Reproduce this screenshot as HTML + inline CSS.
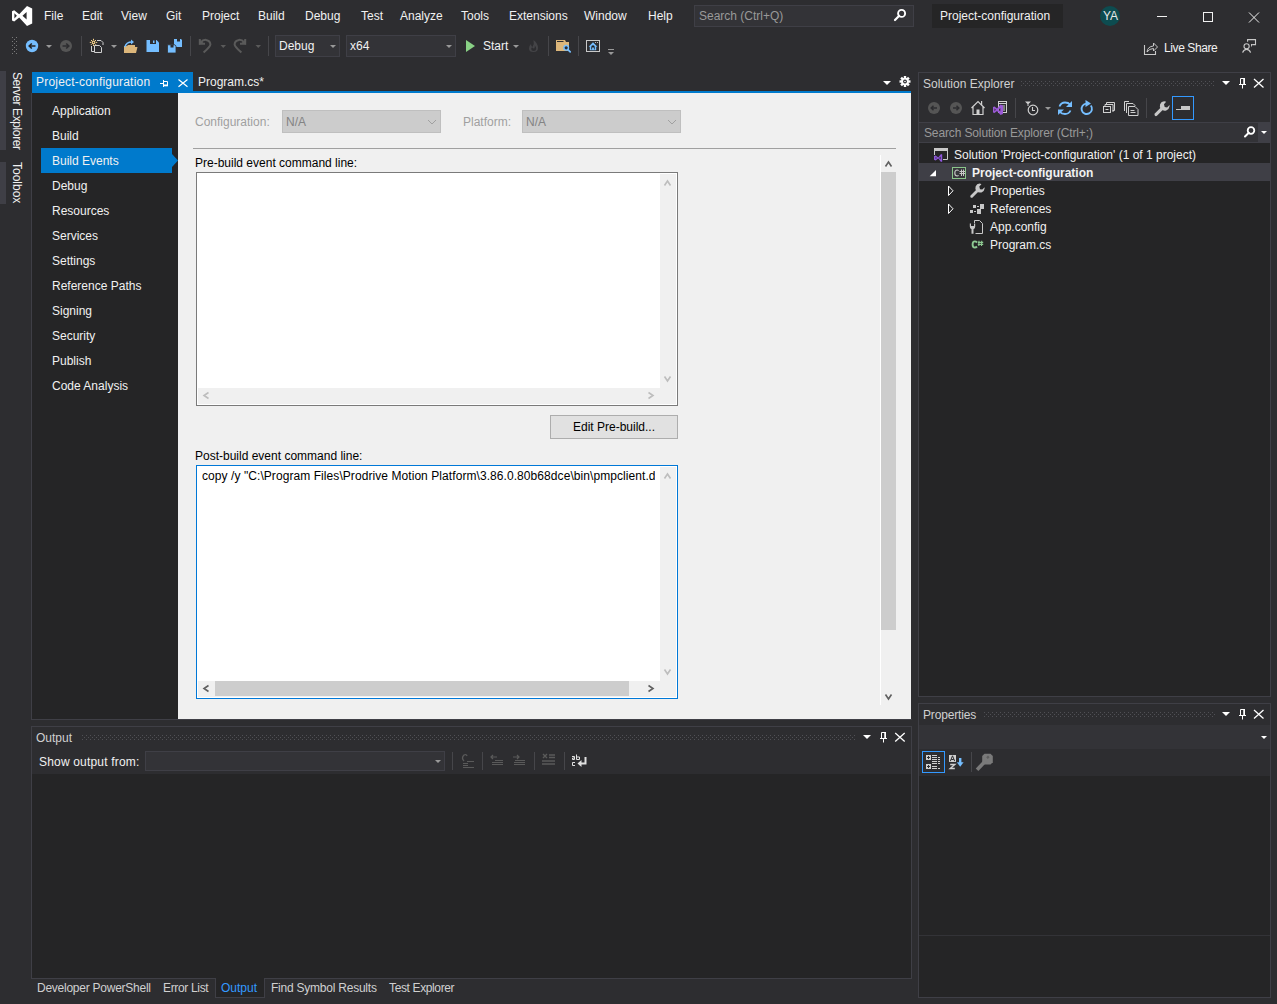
<!DOCTYPE html>
<html><head><meta charset="utf-8">
<style>
*{margin:0;padding:0;box-sizing:border-box}
html,body{width:1277px;height:1004px;overflow:hidden;background:#2d2d30;font-family:"Liberation Sans",sans-serif;font-size:12px;color:#f1f1f1}
.a{position:absolute}
.t{position:absolute;white-space:nowrap;line-height:14px}
svg.ov{position:absolute;left:0;top:0;overflow:visible}
.nav{position:absolute;left:52px;white-space:nowrap;line-height:14px;color:#f1f1f1}
.blk{color:#000}
</style></head><body>

<!-- ===== TITLE / MENU BAR ===== -->
<div class="t" style="left:44px;top:9px">File</div>
<div class="t" style="left:82px;top:9px">Edit</div>
<div class="t" style="left:121px;top:9px">View</div>
<div class="t" style="left:166px;top:9px">Git</div>
<div class="t" style="left:202px;top:9px">Project</div>
<div class="t" style="left:258px;top:9px">Build</div>
<div class="t" style="left:305px;top:9px">Debug</div>
<div class="t" style="left:361px;top:9px">Test</div>
<div class="t" style="left:400px;top:9px">Analyze</div>
<div class="t" style="left:461px;top:9px">Tools</div>
<div class="t" style="left:509px;top:9px">Extensions</div>
<div class="t" style="left:584px;top:9px">Window</div>
<div class="t" style="left:648px;top:9px">Help</div>
<div class="a" style="left:694px;top:5px;width:220px;height:22px;background:#333337;border:1px solid #3f3f46"></div>
<div class="t" style="left:699px;top:9px;color:#999">Search (Ctrl+Q)</div>
<div class="a" style="left:932px;top:4px;width:131px;height:24px;background:#252526"></div>
<div class="t" style="left:940px;top:9px">Project-configuration</div>
<div class="a" style="left:1100px;top:6px;width:20px;height:20px;border-radius:50%;background:#0d4c50"></div>
<div class="t" style="left:1103px;top:9px;color:#e8e8e8">YA</div>

<!-- ===== TOOLBAR ===== -->
<div class="a" style="left:275px;top:35px;width:65px;height:22px;background:#333337;border:1px solid #3f3f46"></div>
<div class="t" style="left:279px;top:39px">Debug</div>
<div class="a" style="left:346px;top:35px;width:110px;height:22px;background:#333337;border:1px solid #3f3f46"></div>
<div class="t" style="left:350px;top:39px">x64</div>
<div class="t" style="left:483px;top:39px">Start</div>
<div class="t" style="left:1164px;top:41px;letter-spacing:-0.4px">Live Share</div>

<!-- ===== LEFT STRIP ===== -->
<div class="a" style="left:0;top:71px;width:6px;height:79px;background:#3f3f46"></div>
<div class="a" style="left:0;top:162px;width:6px;height:42px;background:#3f3f46"></div>
<div class="t" style="left:10px;top:72px;transform-origin:0 0;transform:translate(14px,0) rotate(90deg);letter-spacing:-0.38px">Server Explorer</div>
<div class="t" style="left:10px;top:162px;transform-origin:0 0;transform:translate(14px,0) rotate(90deg)">Toolbox</div>

<!-- ===== DOCUMENT WELL ===== -->
<div class="a" style="left:31px;top:93px;width:1px;height:627px;background:#3f3f46"></div>
<div class="a" style="left:31px;top:719px;width:881px;height:1px;background:#3f3f46"></div>
<div class="a" style="left:32px;top:72px;width:161px;height:21px;background:#007acc"></div>
<div class="t" style="left:36px;top:75px;letter-spacing:0.2px">Project-configuration</div>
<div class="t" style="left:198px;top:75px">Program.cs*</div>
<div class="a" style="left:32px;top:91px;width:879px;height:2px;background:#007acc"></div>

<!-- ===== PROPERTY PAGE ===== -->
<div class="a" style="left:32px;top:93px;width:146px;height:626px;background:#252526"></div>
<div class="a" style="left:178px;top:93px;width:733px;height:626px;background:#f0f0f0"></div>
<div class="a" style="left:41px;top:148px;width:131px;height:25px;background:#007acc"></div>
<div class="nav" style="top:104px">Application</div>
<div class="nav" style="top:129px">Build</div>
<div class="nav" style="top:154px">Build Events</div>
<div class="nav" style="top:179px">Debug</div>
<div class="nav" style="top:204px">Resources</div>
<div class="nav" style="top:229px">Services</div>
<div class="nav" style="top:254px">Settings</div>
<div class="nav" style="top:279px">Reference Paths</div>
<div class="nav" style="top:304px">Signing</div>
<div class="nav" style="top:329px">Security</div>
<div class="nav" style="top:354px">Publish</div>
<div class="nav" style="top:379px">Code Analysis</div>

<div class="t" style="left:195px;top:115px;color:#a0a0a0">Configuration:</div>
<div class="a" style="left:282px;top:110px;width:159px;height:23px;background:#cccccc;border:1px solid #bfbfbf"></div>
<div class="t" style="left:286px;top:115px;color:#838383">N/A</div>
<div class="t" style="left:463px;top:115px;color:#a0a0a0">Platform:</div>
<div class="a" style="left:522px;top:110px;width:159px;height:23px;background:#cccccc;border:1px solid #bfbfbf"></div>
<div class="t" style="left:526px;top:115px;color:#838383">N/A</div>
<div class="a" style="left:193px;top:148px;width:703px;height:1px;background:#a0a0a0"></div>

<div class="t blk" style="left:195px;top:156px">Pre-build event command line:</div>
<div class="a" style="left:196px;top:172px;width:482px;height:234px;background:#fff;border:1px solid #7a7a7a"></div>
<div class="a" style="left:660px;top:174px;width:16px;height:214px;background:#f0f0f0"></div>
<div class="a" style="left:198px;top:388px;width:478px;height:16px;background:#f0f0f0"></div>

<div class="a" style="left:550px;top:415px;width:128px;height:24px;background:#e1e1e1;border:1px solid #adadad"></div>
<div class="t blk" style="left:573px;top:420px">Edit Pre-build...</div>

<div class="t blk" style="left:195px;top:449px">Post-build event command line:</div>
<div class="a" style="left:196px;top:465px;width:482px;height:234px;background:#fff;border:1px solid #0078d7"></div>
<div class="a" style="left:660px;top:467px;width:16px;height:214px;background:#f0f0f0"></div>
<div class="a" style="left:198px;top:681px;width:478px;height:16px;background:#f0f0f0"></div>
<div class="a" style="left:215px;top:681px;width:414px;height:15px;background:#cdcdcd"></div>
<div class="a" style="left:202px;top:468px;width:453px;height:16px;overflow:hidden"><div class="t blk" style="left:0;top:1px;letter-spacing:0.07px">copy /y "C:\Program Files\Prodrive Motion Platform\3.86.0.80b68dce\bin\pmpclient.dll" "$(TargetDir)"</div></div>

<!-- page scrollbar -->
<div class="a" style="left:880px;top:155px;width:1px;height:550px;background:#fff"></div>
<div class="a" style="left:881px;top:172px;width:15px;height:458px;background:#cdcdcd"></div>

<!-- ===== OUTPUT ===== -->
<div class="a" style="left:31px;top:726px;width:881px;height:253px;background:#2d2d30;border:1px solid #3f3f46"></div>
<div class="a" style="left:32px;top:774px;width:879px;height:204px;background:#252526"></div>
<div class="t" style="left:36px;top:731px;color:#d0d0d0">Output</div>
<div class="t" style="left:39px;top:755px;letter-spacing:0.18px">Show output from:</div>
<div class="a" style="left:145px;top:751px;width:300px;height:20px;background:#333337;border:1px solid #3f3f46"></div>
<div class="a" style="left:215px;top:978px;width:50px;height:20px;background:#252526;border:1px solid #3f3f46;border-top:none"></div>
<div class="t" style="left:37px;top:981px;color:#d0d0d0;letter-spacing:-0.25px">Developer PowerShell</div>
<div class="t" style="left:163px;top:981px;color:#d0d0d0;letter-spacing:-0.33px">Error List</div>
<div class="t" style="left:221px;top:981px;color:#3399ff">Output</div>
<div class="t" style="left:271px;top:981px;color:#d0d0d0;letter-spacing:-0.23px">Find Symbol Results</div>
<div class="t" style="left:389px;top:981px;color:#d0d0d0;letter-spacing:-0.37px">Test Explorer</div>

<!-- ===== SOLUTION EXPLORER ===== -->
<div class="a" style="left:918px;top:72px;width:353px;height:625px;background:#2d2d30;border:1px solid #3f3f46"></div>
<div class="a" style="left:919px;top:143px;width:351px;height:553px;background:#252526"></div>
<div class="t" style="left:923px;top:77px;color:#d0d0d0">Solution Explorer</div>
<div class="a" style="left:919px;top:122px;width:351px;height:21px;background:#333337;border-top:1px solid #3f3f46;border-bottom:1px solid #3f3f46"></div>
<div class="a" style="left:1258px;top:123px;width:12px;height:19px;background:#3f3f46"></div>
<div class="t" style="left:924px;top:126px;color:#999;letter-spacing:-0.13px">Search Solution Explorer (Ctrl+;)</div>
<div class="a" style="left:919px;top:163px;width:351px;height:18px;background:#3f3f46"></div>
<div class="t" style="left:954px;top:148px">Solution 'Project-configuration' (1 of 1 project)</div>
<div class="t" style="left:972px;top:166px;font-weight:bold">Project-configuration</div>
<div class="t" style="left:990px;top:184px">Properties</div>
<div class="t" style="left:990px;top:202px">References</div>
<div class="t" style="left:990px;top:220px">App.config</div>
<div class="t" style="left:990px;top:238px">Program.cs</div>

<!-- ===== PROPERTIES ===== -->
<div class="a" style="left:918px;top:703px;width:353px;height:295px;background:#2d2d30;border:1px solid #3f3f46"></div>
<div class="a" style="left:919px;top:725px;width:351px;height:24px;background:#333337"></div>
<div class="a" style="left:919px;top:776px;width:351px;height:221px;background:#252526"></div>
<div class="a" style="left:919px;top:935px;width:351px;height:1px;background:#333337"></div>
<div class="t" style="left:923px;top:708px;color:#d0d0d0;letter-spacing:-0.15px">Properties</div>


<svg class="ov" width="1277" height="1004" viewBox="0 0 1277 1004" shape-rendering="geometricPrecision">
<defs>
<pattern id="gO" x="82" y="735" width="4" height="6" patternUnits="userSpaceOnUse"><rect x="0" y="0" width="1" height="1" fill="#505055"/><rect x="2" y="2" width="1" height="1" fill="#505055"/><rect x="0" y="4" width="1" height="1" fill="#505055"/></pattern>
<pattern id="gS" x="1021" y="81" width="4" height="6" patternUnits="userSpaceOnUse"><rect x="0" y="0" width="1" height="1" fill="#505055"/><rect x="2" y="2" width="1" height="1" fill="#505055"/><rect x="0" y="4" width="1" height="1" fill="#505055"/></pattern>
<pattern id="gP" x="984" y="712" width="4" height="6" patternUnits="userSpaceOnUse"><rect x="0" y="0" width="1" height="1" fill="#505055"/><rect x="2" y="2" width="1" height="1" fill="#505055"/><rect x="0" y="4" width="1" height="1" fill="#505055"/></pattern>

</defs>
<!-- VS logo -->
<path fill="#fff" fill-rule="evenodd" d="M12 11.2 L14.2 10.2 L19.2 14.2 L27 6 L32.2 8.4 L32.2 23.6 L27 26 L19.2 17.4 L14.2 21.4 L12 20.4 Z M14.4 13.2 L16.9 15.7 L14.4 18.4 Z M26.6 12 L22.5 15.7 L26.6 19.6 Z"/>
<!-- title search icon -->
<circle cx="901.6" cy="13.4" r="3.5" fill="none" stroke="#fff" stroke-width="1.9"/>
<path d="M899.2 15.8 L895 20" stroke="#fff" stroke-width="2.2" stroke-linecap="round"/>
<!-- window controls -->
<path d="M1157 16.5h10" stroke="#f1f1f1" stroke-width="1"/>
<rect x="1203.5" y="12.5" width="9" height="9" fill="none" stroke="#f1f1f1" stroke-width="1"/>
<path d="M1249 12.5 L1259 22.5 M1259 12.5 L1249 22.5" stroke="#f1f1f1" stroke-width="1"/>

<!-- toolbar grip -->
<g fill="#7a7a7a">
<rect x="12" y="37" width="1" height="1"/><rect x="16" y="37" width="1" height="1"/><rect x="14" y="39" width="1" height="1"/>
<rect x="12" y="41" width="1" height="1"/><rect x="16" y="41" width="1" height="1"/><rect x="14" y="43" width="1" height="1"/>
<rect x="12" y="45" width="1" height="1"/><rect x="16" y="45" width="1" height="1"/><rect x="14" y="47" width="1" height="1"/>
<rect x="12" y="49" width="1" height="1"/><rect x="16" y="49" width="1" height="1"/><rect x="14" y="51" width="1" height="1"/>
<rect x="12" y="53" width="1" height="1"/><rect x="16" y="53" width="1" height="1"/>
</g>
<!-- back / fwd -->
<circle cx="32" cy="46" r="6.2" fill="#75beff"/>
<path d="M35.5 46 H29.5 M31.8 43.5 L29.2 46 L31.8 48.5" stroke="#252526" stroke-width="1.6" fill="none"/>
<path d="M46 45h6l-3 3z" fill="#999"/>
<circle cx="66" cy="46" r="6" fill="#555"/>
<path d="M62.5 46 H68.5 M66.2 43.5 L68.8 46 L66.2 48.5" stroke="#2d2d30" stroke-width="1.6" fill="none"/>
<rect x="81" y="36" width="1" height="20" fill="#46464a"/>
<!-- new project -->
<path d="M91.5 46 V51.5 H94 M97 40.5 H101 L103 42.5 V45" stroke="#d0d0d0" stroke-width="1" fill="none"/>
<path d="M94.5 52.5 V45.5 H99.5 L101.5 47.5 V52.5 Z" stroke="#d0d0d0" stroke-width="1" fill="#2d2d30"/>
<g stroke="#f9d48b" stroke-width="1"><path d="M93.5 38.8v1.6 M93.5 44.4v1.6 M89.8 42.4h1.6 M95.6 42.4h1.6 M91 40l1 1 M96 40l-1 1 M91 44.8l1 -1 M96 44.8l-1 -1"/></g>
<rect x="92.4" y="41.3" width="2.2" height="2.2" fill="none" stroke="#f9d48b" stroke-width="0.9"/>
<path d="M111 45h6l-3 3z" fill="#999"/>
<!-- open folder -->
<path d="M124 53 V46 H127 L128 45 H135 V47 H137.5 L136 53 Z" fill="#dcb67a"/>
<path d="M125 47 Q126 42 132 42" stroke="#75beff" stroke-width="1.6" fill="none"/>
<path d="M131 39.5 L134 42 L131 44.5 Z" fill="#75beff"/>
<!-- save -->
<path d="M146.5 40 H156.5 L159 42.5 V52 H146.5 Z" fill="#75beff"/>
<rect x="150" y="40" width="6" height="4" fill="#2d2d30"/><rect x="153" y="40.5" width="1.5" height="2.5" fill="#75beff"/>
<!-- save all -->
<path d="M174 39 H181 L182 40 V47 H174 Z" fill="#75beff"/>
<rect x="177" y="39" width="3" height="2.5" fill="#2d2d30"/>
<path d="M167.5 44.8 H175 L176 46 V53 H167.5 Z" fill="#75beff" stroke="#2d2d30" stroke-width="0.8"/>
<rect x="170.5" y="45" width="3" height="2.5" fill="#2d2d30"/>
<rect x="190" y="36" width="1" height="20" fill="#46464a"/>
<!-- undo redo -->
<g stroke="#5a5a5a" stroke-width="2" fill="none">
<path d="M200.6 42.6 Q203 39.6 206 39.9 Q210.4 40.6 210.4 44.5 Q210.4 46.5 203.6 52.6"/>
<path d="M199.8 39 V43.8 H205"/>
<path d="M244.4 42.6 Q242 39.6 239 39.9 Q234.6 40.6 234.6 44.5 Q234.6 46.5 241.4 52.6"/>
<path d="M245.2 39 V43.8 H240"/>
</g>
<path d="M199 39 L203.5 43 L199 44.8 Z" fill="#5a5a5a"/>
<path d="M246 39 L241.5 43 L246 44.8 Z" fill="#5a5a5a"/>
<path d="M220.5 45h5.5l-2.75 3z" fill="#5a5a5a"/>
<path d="M255.5 45h5.5l-2.75 3z" fill="#5a5a5a"/>
<rect x="268" y="36" width="1" height="20" fill="#46464a"/>
<!-- combos arrows -->
<path d="M330 45h6l-3 3z" fill="#999"/>
<path d="M446 45h6l-3 3z" fill="#999"/>
<!-- start -->
<path d="M466 40 L475 46 L466 52 Z" fill="#89d185"/>
<path d="M513 45h6l-3 3z" fill="#999"/>
<path d="M533.5 40 Q538 43.5 538 48 Q538 52 533.5 52 Q529 52 529 48.5 Q529 45.5 531 44 Q531 46.5 532.5 47 Q534.5 44 533.5 40 Z" fill="#444447"/>
<path d="M533.6 51 Q531.2 51 531.2 49 Q531.2 47.8 532.2 47.2 Q533 48.6 534.2 48.4 Q535.2 47 534.8 45.5 Q536.2 47 536.2 48.8 Q536.2 51 533.6 51 Z" fill="#2d2d30"/>
<rect x="548" y="36" width="1" height="20" fill="#46464a"/>
<!-- folder search -->
<path d="M556 51 V40 H565 L566 42 H569 V51 Z" fill="#dcb67a"/>
<rect x="557" y="41" width="6.5" height="1" fill="#2d2d30"/>
<circle cx="566.2" cy="47.8" r="2.3" fill="#2d2d30" stroke="#75beff" stroke-width="1.4"/>
<path d="M567.9 49.6 L570.2 51.9" stroke="#75beff" stroke-width="1.7" stroke-linecap="round"/>
<rect x="578" y="36" width="1" height="20" fill="#46464a"/>
<!-- home window -->
<rect x="586.5" y="40.5" width="13" height="11" fill="none" stroke="#c8c8c8" stroke-width="1"/>
<path d="M588.6 46.8 L593 42.3 L597.4 46.8 L596.2 46.8 V50.2 H589.8 V46.8 Z" fill="#75beff"/>
<path d="M591.3 49.5 V47 Q591.3 45.2 593 45.2 Q594.7 45.2 594.7 47 V49.5 H593.9 V47.5 H592.1 V49.5 Z" fill="#1e1e1e"/>
<circle cx="595.5" cy="42.5" r="0.6" fill="#d0d0d0"/><circle cx="597.5" cy="42.5" r="0.6" fill="#d0d0d0"/>
<path d="M608 49.5h6" stroke="#999" stroke-width="1"/><path d="M608 52h6l-3 3z" fill="#999"/>
<!-- live share -->
<path d="M1144.5 45 V54.5 H1155.5 V51" stroke="#c8c8c8" stroke-width="1.1" fill="none"/>
<path d="M1147 52 Q1147.5 46.5 1153.5 46 V43 L1157.5 47 L1153.5 51 V48.5 Q1149.5 48.5 1147 52 Z" stroke="#c8c8c8" stroke-width="1" fill="none"/>
<!-- feedback -->
<path d="M1247.6 41.8 V39.6 H1255.5 V44.6 H1252.5" stroke="#c8c8c8" stroke-width="1.1" fill="none"/>
<path d="M1253 44 L1251 44 L1251 47.2 Z" fill="#c8c8c8"/>
<circle cx="1246.6" cy="46.3" r="2.6" fill="#2d2d30" stroke="#c8c8c8" stroke-width="1.1"/>
<path d="M1242.6 52.6 Q1243.8 49.4 1246.6 49.4 Q1249.4 49.4 1250.6 52.6" stroke="#c8c8c8" stroke-width="1.2" fill="none"/>

<!-- doc tab pin/close -->
<path d="M160 83.5 H163.5 M163.5 80 V87 M163.5 81.5 H167.5 V85" stroke="#fff" stroke-width="1" fill="none"/>
<rect x="163" y="84.5" width="5" height="1.8" fill="#fff"/>
<path d="M178.5 79.5 L187.5 86.7 M187.5 79.5 L178.5 86.7" stroke="#fff" stroke-width="1.2"/>
<!-- well dropdown + gear -->
<path d="M883 81h8l-4 4z" fill="#fff"/>
<g transform="translate(905 81.5)" fill="#fff">
<circle r="3.8"/>
<rect x="-1.2" y="-5.5" width="2.4" height="11"/><rect x="-5.5" y="-1.2" width="11" height="2.4"/>
<rect x="-1.2" y="-5.5" width="2.4" height="11" transform="rotate(45)"/><rect x="-1.2" y="-5.5" width="2.4" height="11" transform="rotate(-45)"/>
<circle r="1.9" fill="#2d2d30"/><circle r="0.8" fill="#fff"/>
</g>
<!-- nav arrow -->
<path d="M172 154 L178 160.5 L172 167 Z" fill="#007acc"/>

<!-- combo chevrons -->
<path d="M428 120 L432 124 L436 120" stroke="#a0a0a0" stroke-width="1" fill="none"/>
<path d="M668 120 L672 124 L676 120" stroke="#a0a0a0" stroke-width="1" fill="none"/>
<!-- textbox1 scroll arrows -->
<g stroke="#bdbdbd" stroke-width="1.6" fill="none">
<path d="M664.5 185.5 L667.5 181 L670.5 185.5"/>
<path d="M664.5 376.5 L667.5 381 L670.5 376.5"/>
<path d="M208.5 392.5 L204 395.5 L208.5 398.5"/>
<path d="M648.5 392.5 L653 395.5 L648.5 398.5"/>
</g>
<g stroke="#bdbdbd" stroke-width="1.6" fill="none">
<path d="M664.5 478.5 L667.5 474 L670.5 478.5"/>
<path d="M664.5 669.5 L667.5 674 L670.5 669.5"/>
</g>
<g stroke="#606060" stroke-width="1.6" fill="none">
<path d="M208.5 685.5 L204 688.5 L208.5 691.5"/>
<path d="M648.5 685.5 L653 688.5 L648.5 691.5"/>
<path d="M885.5 166.5 L888.5 162 L891.5 166.5"/>
<path d="M885.5 694.5 L888.5 699 L891.5 694.5"/>
</g>

<!-- OUTPUT header -->
<rect x="82" y="735" width="774" height="5" fill="url(#gO)"/>
<path d="M863 735h8l-4 4z" fill="#fff"/>
<g transform="translate(880 732)" fill="none" stroke="#fff" stroke-width="1"><path d="M1.5 0.5 H5 V6.5 M1.5 0.5 V6.5 M0 6.5 H7 M3.5 7 V10.5"/><rect x="4.5" y="0" width="1.5" height="7" fill="#fff" stroke="none"/></g>
<path d="M895.2 733 l9.5 8.5 M904.7 733 l-9.5 8.5" stroke="#fff" stroke-width="1.3"/>
<!-- output toolbar -->
<path d="M435 760h6l-3 3z" fill="#999"/>
<g fill="#46464a"><rect x="452" y="752" width="1" height="18"/><rect x="482" y="752" width="1" height="18"/><rect x="534" y="752" width="1" height="18"/><rect x="564" y="752" width="1" height="18"/></g>
<g stroke="#5a5a5a" stroke-width="1" fill="none">
<path d="M464 761 Q461 758 464 755 Q466.5 754 467 756" stroke-width="1.3"/>
<path d="M467 761.5h7 M463 763.5h5 M463 765.5h5 M463 767.5h11"/>
<path d="M497 757h-6 M493 755 L491 757 L493 759 M495 760.5h8 M492 762.5h11 M492 764.5h11" stroke-width="1.2"/>
<path d="M513 757h6 M517 755 L519 757 L517 759 M515 760.5h10 M514 762.5h11 M514 764.5h11" stroke-width="1.2"/>
<path d="M543 754 L547 758 M547 754 L543 758 M549 755h6 M549 757.5h6 M542 761h13 M542 764h13" stroke-width="1.4"/>
</g>
<g stroke="#e0e0e0" stroke-width="1" fill="none">
<path d="M572 756.5 H574.5 V759.5 H572.5 V758 H574.5"/>
<path d="M576.5 754.5 V759.5 H579.5 V757 H576.5"/>
<path d="M575 762.5 H572.5 V765.5 H575"/>
</g>
<path d="M585.5 757 V763.5 H579" stroke="#e0e0e0" stroke-width="2" fill="none"/>
<path d="M581.5 760 L577.5 763.5 L581.5 767 Z" fill="#e0e0e0"/>

<!-- SOLUTION EXPLORER header -->
<rect x="1021" y="81" width="194" height="5" fill="url(#gS)"/>
<path d="M1222 81h8l-4 4z" fill="#fff"/>
<g transform="translate(1239 78)" fill="none" stroke="#fff" stroke-width="1"><path d="M1.5 0.5 H5 V6.5 M1.5 0.5 V6.5 M0 6.5 H7 M3.5 7 V10.5"/><rect x="4.5" y="0" width="1.5" height="7" fill="#fff" stroke="none"/></g>
<path d="M1254 79 l9.5 8.5 M1263.5 79 l-9.5 8.5" stroke="#fff" stroke-width="1.3"/>
<!-- SE toolbar -->
<circle cx="934" cy="108" r="6" fill="#555"/>
<path d="M937 108 H931.5 M933.5 105.8 L931.2 108 L933.5 110.2" stroke="#2d2d30" stroke-width="1.5" fill="none"/>
<circle cx="956" cy="108" r="6" fill="#555"/>
<path d="M953 108 H958.5 M956.5 105.8 L958.8 108 L956.5 110.2" stroke="#2d2d30" stroke-width="1.5" fill="none"/>
<path d="M971.5 108 L978 101.5 L984.5 108 M973 107 V114.5 H983 V107" stroke="#d0d0d0" stroke-width="1.2" fill="none"/>
<rect x="976.5" y="109.5" width="3" height="5" fill="#d0d0d0"/>
<rect x="981" y="101" width="1.2" height="4" fill="#d0d0d0"/>
<rect x="998.5" y="101.5" width="8" height="11" fill="#2d2d30" stroke="#d0d0d0" stroke-width="1"/>
<path d="M998.5 103.5h8 M1001 106h4 M1001 108h4 M1001 110h4" stroke="#d0d0d0" stroke-width="1"/>
<path fill="#9b59d7" fill-rule="evenodd" d="M993 107 L994.5 106.5 L997 108.5 L1000.5 104.5 L1003 105.5 L1003 114 L1000.5 115 L997 111 L994.5 113 L993 112.5 Z M994.5 108.3 L995.8 109.8 L994.5 111.2 Z M1000.3 108 L998.5 109.8 L1000.3 111.6 Z"/>
<rect x="1015" y="98" width="1" height="20" fill="#46464a"/>
<path d="M1025 101.5 H1031 L1028.5 104 V106 H1027.5 V104 Z" fill="#d0d0d0"/>
<circle cx="1033" cy="110" r="4.8" fill="none" stroke="#d0d0d0" stroke-width="1.2"/>
<path d="M1032.5 107 V110.5 H1035" stroke="#d0d0d0" stroke-width="1.1" fill="none"/>
<path d="M1045 107h6l-3 3z" fill="#999"/>
<!-- sync -->
<g stroke="#75beff" stroke-width="1.8" fill="none">
<path d="M1059.5 106.5 Q1061 102.5 1065 102.5 Q1068.5 102.5 1070 104.5"/>
<path d="M1070.5 110.5 Q1069 114 1065 114 Q1061.5 114 1060 112"/>
</g>
<path d="M1072 101 V107 H1066 Z" fill="#75beff"/>
<path d="M1058 115 V109.5 H1064 Z" fill="#75beff"/>
<!-- refresh -->
<path d="M1090.8 105.5 A5.2 5.2 0 1 1 1086.5 103.6" stroke="#75beff" stroke-width="1.9" fill="none"/>
<path d="M1085.5 100 L1091 103.5 L1085.5 107 Z" fill="#75beff"/>
<!-- collapse all -->
<g stroke="#d0d0d0" stroke-width="1" fill="none">
<path d="M1106.5 104.5 V102.5 H1114.5 V110.5 H1112.5"/>
<path d="M1105 106 V104.5 H1113 V112"/>
<rect x="1103.5" y="106.5" width="7" height="6" fill="#2d2d30"/>
<path d="M1105.5 109.5h3"/>
</g>
<!-- show all files -->
<g stroke="#d0d0d0" stroke-width="1" fill="none">
<path d="M1124.5 111 V101.5 H1129"/>
<path d="M1126.5 113 V103.5 H1133 L1135 105.5 V106"/>
<path d="M1128.5 115.5 V106.5 H1135 L1138 109.5 V115.5 Z" fill="#2d2d30"/>
<path d="M1130.5 110.5h4 M1130.5 112.5h5"/>
</g>
<rect x="1146" y="98" width="1" height="20" fill="#46464a"/>
<!-- wrench -->
<g fill="#c8c8c8" transform="translate(1154.2 101.2) scale(1.05) translate(-970 -183.6)">
<path d="M970.6 195.4 L976.3 189.7 L978.3 191.7 L972.6 197.4 Q971.6 198.3 970.7 197.4 Q969.8 196.4 970.6 195.4 Z"/>
<path d="M979.5 183.6 Q976.8 183.8 975.6 186.5 Q974.8 189 976.4 191 Q978.5 193.2 981.5 192.4 Q984.3 191.4 984.6 188.5 L984.6 187.2 L982.3 189.5 L980 189.2 L979.3 186.5 L981.4 184.2 Q980.6 183.6 979.5 183.6 Z"/>
</g>
<!-- preview toggle -->
<rect x="1172.5" y="96.5" width="21" height="23" fill="#2d2d30" stroke="#3399ff" stroke-width="1"/>
<path d="M1176 109.5 H1190" stroke="#c8c8c8" stroke-width="1"/>
<rect x="1181" y="106" width="9" height="3.5" fill="#c8c8c8"/>
<!-- SE search -->
<circle cx="1251" cy="130.5" r="3.3" fill="none" stroke="#fff" stroke-width="1.8"/>
<path d="M1248.8 132.7 L1245 136.5" stroke="#fff" stroke-width="2" stroke-linecap="round"/>
<path d="M1261 131h6l-3 3z" fill="#fff"/>

<!-- tree icons -->
<path d="M934.5 155 V148.5 H947.5 V159.5 H943" stroke="#c8c8c8" stroke-width="1" fill="none"/>
<rect x="934" y="148" width="14" height="3" fill="#c8c8c8"/>
<path fill="#8f56dc" fill-rule="evenodd" d="M934 156.2 L935.6 155.4 L938.3 157.6 L941 154 L942.2 154.6 L942.2 161.4 L941 162 L938.3 158.4 L935.6 160.6 L934 159.8 Z M935.6 156.9 L936.9 158 L935.6 159.1 Z M940.6 156.5 L939.1 158 L940.6 159.5 Z"/>
<path d="M936 170 V176.3 H929.7 Z" fill="#fff"/>
<rect x="952.5" y="167.5" width="13" height="11" fill="#38383c" stroke="#8bc68b" stroke-width="1"/>
<path d="M958.6 170.6 Q958 170 957.2 170 Q954.8 170 954.8 173 Q954.8 176 957.2 176 Q958 176 958.6 175.4" stroke="#c8c8c8" stroke-width="1.1" fill="none"/>
<path d="M961.5 169.5 V176 M963.5 169.5 V176 M959.5 171.5 H965 M959.5 173.5 H965" stroke="#c8c8c8" stroke-width="1"/>
<path d="M948.5 186 V195.5 L953 190.75 Z" fill="none" stroke="#fff" stroke-width="1"/>
<path d="M948.5 204 V213.5 L953 208.75 Z" fill="none" stroke="#fff" stroke-width="1"/>
<g fill="#c8c8c8">
<path d="M970.6 195.4 L976.3 189.7 L978.3 191.7 L972.6 197.4 Q971.6 198.3 970.7 197.4 Q969.8 196.4 970.6 195.4 Z"/>
<path d="M979.5 183.6 Q976.8 183.8 975.6 186.5 Q974.8 189 976.4 191 Q978.5 193.2 981.5 192.4 Q984.3 191.4 984.6 188.5 L984.6 187.2 L982.3 189.5 L980 189.2 L979.3 186.5 L981.4 184.2 Q980.6 183.6 979.5 183.6 Z"/>
</g>
<g fill="#c8c8c8">
<rect x="973" y="205" width="3" height="3"/><rect x="977" y="206" width="2" height="1"/><rect x="980" y="204" width="4" height="5"/>
<rect x="970" y="210" width="3" height="3"/><rect x="974" y="211" width="2" height="1"/><rect x="977" y="209" width="4" height="5"/>
</g>
<path d="M974.5 223 V220.5 H979.5 L982.5 223.5 V233.5 H975.5" stroke="#c8c8c8" stroke-width="1" fill="none"/>
<path fill="#c8c8c8" d="M969.8 223.5 V226.5 Q969.8 228.6 971.5 229.2 V233.8 H973.5 V229.2 Q975.2 228.6 975.2 226.5 V223.5 L974 223.5 V226 H971 V223.5 Z"/>
<path d="M977 242.5 Q976 241.4 974.8 241.4 Q972.6 241.4 972.6 244.5 Q972.6 247.6 974.8 247.6 Q976 247.6 977 246.5" stroke="#8dc891" stroke-width="1.9" fill="none"/>
<path d="M979 240.8 L978.8 246 M981.7 240.8 L981.5 246 M977.8 242.4 H983.2 M977.8 244.4 H983.2" stroke="#8dc891" stroke-width="1.1"/>

<!-- PROPERTIES header -->
<rect x="984" y="712" width="231" height="5" fill="url(#gP)"/>
<path d="M1222 712h8l-4 4z" fill="#fff"/>
<g transform="translate(1239 709)" fill="none" stroke="#fff" stroke-width="1"><path d="M1.5 0.5 H5 V6.5 M1.5 0.5 V6.5 M0 6.5 H7 M3.5 7 V10.5"/><rect x="4.5" y="0" width="1.5" height="7" fill="#fff" stroke="none"/></g>
<path d="M1254 710 l9.5 8.5 M1263.5 710 l-9.5 8.5" stroke="#fff" stroke-width="1.3"/>
<path d="M1261 736h6l-3 3z" fill="#fff"/>
<rect x="922.5" y="751.5" width="22" height="21" fill="#2d2d30" stroke="#3399ff" stroke-width="1"/>
<g fill="#d0d0d0">
<rect x="926" y="755" width="5" height="5"/><rect x="926" y="764" width="5" height="5"/>
<rect x="932" y="755" width="5" height="1"/><rect x="932" y="757" width="5" height="1"/><rect x="932" y="759" width="5" height="1"/><rect x="932" y="761" width="5" height="1"/><rect x="932" y="763" width="5" height="1"/><rect x="932" y="766" width="5" height="1"/><rect x="932" y="768" width="5" height="1"/>
<rect x="938" y="757" width="2" height="1"/><rect x="938" y="759" width="2" height="1"/><rect x="938" y="761" width="2" height="1"/><rect x="938" y="763" width="2" height="1"/><rect x="938" y="768" width="2" height="1"/>
</g>
<g fill="#2d2d30"><rect x="928" y="756" width="1" height="3"/><rect x="927" y="757" width="3" height="1"/><rect x="928" y="765" width="1" height="3"/><rect x="927" y="766" width="3" height="1"/></g>
<rect x="949" y="755" width="7" height="7" fill="#d0d0d0"/>
<path d="M950.3 761.2 L952.5 755.8 L954.7 761.2 M951.2 759.5 H953.8" stroke="#2d2d30" stroke-width="1" fill="none"/>
<path d="M950.2 764.5 H954.8 L950.2 768.5 H954.8" stroke="#d0d0d0" stroke-width="1.4" fill="none"/>
<path d="M960.2 758 V764" stroke="#75beff" stroke-width="2.4"/>
<path d="M956.8 762.3 H963.6 L960.2 766.8 Z" fill="#75beff"/>
<rect x="971" y="752" width="1" height="20" fill="#46464a"/>
<path d="M984.5 753.8 H990.5 L992.8 756.1 V762.3 L990.5 764.6 H984.5 L982.2 762.3 V756.1 Z" fill="#7a7a7a"/>
<path d="M984.5 762 L978.3 768.4" stroke="#7a7a7a" stroke-width="3.6" stroke-linecap="square"/>
<rect x="987" y="756" width="2.2" height="2.5" fill="#5e5e5e" transform="rotate(45 988 757)"/>
</svg>
</body></html>
